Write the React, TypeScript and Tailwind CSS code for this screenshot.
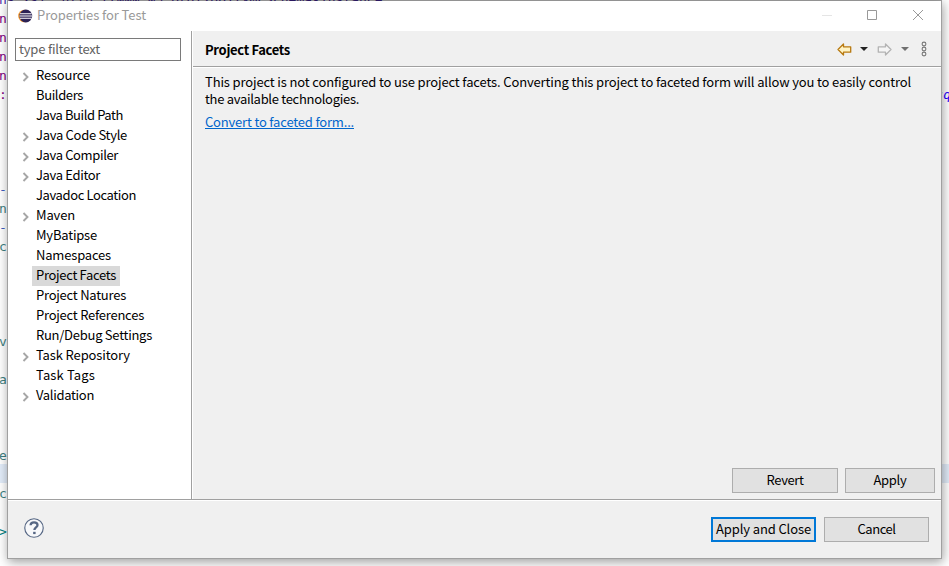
import React from "react";

const editorRows: { t: string; c: string }[] = [
  { t: "ns:xsi=\"http://www.w3.org/2001/XMLSchema-instance\"", c: "text-[#4a2aa8]" },
  { t: "n", c: "text-[#7f007f]" },
  { t: "n", c: "text-[#7f007f]" },
  { t: "n", c: "text-[#7f007f]" },
  { t: "n", c: "text-[#7f007f]" },
  { t: ":", c: "text-[#7f007f]" },
  { t: "", c: "" },
  { t: "", c: "" },
  { t: "", c: "" },
  { t: "", c: "" },
  { t: "-", c: "text-[#3f5fbf]" },
  { t: "n", c: "text-[#3f7f7f]" },
  { t: "-", c: "text-[#3f5fbf]" },
  { t: "c", c: "text-[#3f7f7f]" },
  { t: "", c: "" },
  { t: "", c: "" },
  { t: "", c: "" },
  { t: "", c: "" },
  { t: "v", c: "text-[#3f7f7f]" },
  { t: "", c: "" },
  { t: "a", c: "text-[#3f7f7f]" },
  { t: "", c: "" },
  { t: "", c: "" },
  { t: "", c: "" },
  { t: "e", c: "text-[#3f7f7f]" },
  { t: "", c: "bg-[#e2ecf9]" },
  { t: "c", c: "text-[#3f7f7f]" },
  { t: "", c: "" },
  { t: ">", c: "text-[#008080]" },
  { t: "", c: "" },
  { t: "", c: "" },
];

const tree: { label: string; open?: boolean; selected?: boolean; w: string }[] = [
  { label: "Resource", open: true, w: "w-[54px]" },
  { label: "Builders", w: "w-[47px]" },
  { label: "Java Build Path", w: "w-[87px]" },
  { label: "Java Code Style", open: true, w: "w-[91px]" },
  { label: "Java Compiler", open: true, w: "w-[82px]" },
  { label: "Java Editor", open: true, w: "w-[64px]" },
  { label: "Javadoc Location", w: "w-[100px]" },
  { label: "Maven", open: true, w: "w-[39px]" },
  { label: "MyBatipse", w: "w-[61px]" },
  { label: "Namespaces", w: "w-[75px]" },
  { label: "Project Facets", selected: true, w: "w-[80px]" },
  { label: "Project Natures", w: "w-[90px]" },
  { label: "Project References", w: "w-[108px]" },
  { label: "Run/Debug Settings", w: "w-[116px]" },
  { label: "Task Repository", open: true, w: "w-[94px]" },
  { label: "Task Tags", w: "w-[59px]" },
  { label: "Validation", open: true, w: "w-[58px]" },
];

// Stretches or tightens the letter spacing so a line occupies its box exactly.
function Fit({ children, w }: { children: string; w: string }) {
  const ref = React.useRef<HTMLSpanElement>(null);
  const [spacing, setSpacing] = React.useState(0);
  React.useLayoutEffect(() => {
    const el = ref.current;
    if (!el || !el.parentElement) return;
    const target = el.parentElement.getBoundingClientRect().width;
    setSpacing((target - el.getBoundingClientRect().width) / children.length);
  }, [children]);
  return (
    <span className={`block shrink-0 whitespace-nowrap ${w}`}>
      <span ref={ref} style={{ letterSpacing: `${spacing}px` }}>{children}</span>
    </span>
  );
}

function EclipseLogo() {
  return (
    <svg width="15" height="14" viewBox="0 0 15 14" className="-mt-px">
      <circle cx="6.5" cy="7" r="6.3" fill="#f59a2d" />
      <circle cx="7.8" cy="7" r="6.4" fill="#2c2255" />
      <path d="M2 4.7h11.6M1.5 7h12.6M2 9.3h11.6" stroke="#fff" strokeWidth="1.1" />
    </svg>
  );
}

function Arrow({ flip, stroke, fill }: { flip?: boolean; stroke: string; fill: string }) {
  return (
    <svg width="15" height="13" viewBox="0 0 15 13" className={flip ? "-scale-x-100" : ""}>
      <path d="M1 6.500 6.500 1v2.800h7.200v5.400H6.500V12Z" fill={fill} stroke={stroke} strokeWidth="1.300" strokeLinejoin="round" />
    </svg>
  );
}

function Caret({ color }: { color: string }) {
  return (
    <svg width="8" height="4" viewBox="0 0 8 4">
      <path d="M0 0h8L4 4Z" fill={color} />
    </svg>
  );
}

function Button({ label, box, w }: { label: string; box: string; w: string }) {
  return (
    <button className={`flex h-[25px] items-center justify-center bg-[#e1e1e1] pb-[2px] ${box}`}>
      <Fit w={w}>{label}</Fit>
    </button>
  );
}

export default function App() {
  return (
    <div className="relative h-[566px] w-[949px] overflow-hidden bg-white font-['Noto_Sans_CJK_SC',sans-serif] text-[13px] leading-[17px] text-black">
      <div className="-mt-[11px] font-['DejaVu_Sans_Mono',monospace] text-[13px] leading-[21px]">
        {editorRows.map((r, i) => (
          <div key={i} className={`flex h-[19px] justify-between whitespace-pre ${r.c}`}>
            <span className="-ml-px">{r.t}</span>
            {i === 5 && <span className="-mr-[2px] italic text-[#2a00ff]">sq</span>}
          </div>
        ))}
      </div>

      <div className="absolute left-[7px] top-0 flex h-[559px] w-[935px] flex-col border border-[#a0a0a0] border-t-black/35 bg-white bg-clip-padding shadow-[1px_3px_10px_rgba(0,0,0,0.38)]">
        <div className="flex h-[30px] shrink-0 items-center pl-[10px] text-[#999]">
          <EclipseLogo />
          <div className="ml-[4px] pb-[3px]"><Fit w="w-[109px]">Properties for Test</Fit></div>
          <svg width="103" height="12" viewBox="0 0 103 12" className="-mt-[2px] ml-auto mr-[17px]" fill="none">
            <path d="M1 6.500h10" stroke="#e5e5e5" />
            <path d="M46.500 1.500h9v9h-9z" stroke="#999" />
            <path d="m92 1 10 10M102 1 92 11" stroke="#999" />
          </svg>
        </div>

        <div className="flex h-[468px] shrink-0">
          <div className="w-[184px] shrink-0 border-r border-[#a0a0a0]">
            <div className="ml-[7px] mt-[7px] flex h-[23px] w-[166px] items-center border border-[#7a7a7a] pb-[2px] pl-[3px] text-[#5f5f5f]">
              <Fit w="w-[81px]">type filter text</Fit>
            </div>
            <div className="mt-[5px]">
              {tree.map((n) => (
                <div key={n.label} className="flex h-5 items-center pl-[14px]">
                  <svg width="8" height="10" viewBox="0 0 8 10" className="mt-px shrink-0" fill="none">
                    {n.open && <path d="m1.500 1 4 4-4 4" stroke="#a6a6a6" strokeWidth="1.900" />}
                  </svg>
                  <div className={`ml-[2px] flex h-5 items-center px-1 pb-[3px] ${n.selected ? "bg-[#d9d9d9]" : ""}`}>
                    <Fit w={n.w}>{n.label}</Fit>
                  </div>
                </div>
              ))}
            </div>
          </div>

          <div className="flex grow flex-col border-l border-white bg-[#f0f0f0]">
            <div className="flex h-[36px] shrink-0 items-center border-b border-[#a0a0a0] pl-[12px] pr-[14px]">
              <div className="mt-px font-bold"><Fit w="w-[85px]">Project Facets</Fit></div>
              <div className="ml-auto flex items-center pt-px">
                <Arrow stroke="#b87a12" fill="#fff3c4" />
                <div className="ml-[8px]"><Caret color="#222" /></div>
                <div className="ml-[9px]"><Arrow flip stroke="#b3b3b3" fill="#f5f5f5" /></div>
                <div className="ml-[9px]"><Caret color="#707070" /></div>
                <svg width="6" height="16" viewBox="0 0 6 16" className="ml-[12px]" fill="none" stroke="#777" strokeWidth="1.100">
                  <circle cx="3" cy="3" r="1.900" /><circle cx="3" cy="8" r="1.900" /><circle cx="3" cy="13" r="1.900" />
                </svg>
              </div>
            </div>
            <div className="flex grow flex-col border-t border-white pl-[12px] pt-[5px]">
              <Fit w="w-[706px]">This project is not configured to use project facets. Converting this project to faceted form will allow you to easily control</Fit>
              <Fit w="w-[154px]">the available technologies.</Fit>
              <a className="mt-[6px] text-[#0066cc] underline [text-decoration-skip-ink:none] decoration-1 underline-offset-1"><Fit w="w-[149px]">Convert to faceted form...</Fit></a>
              <div className="mb-[6px] mr-[6px] mt-auto flex justify-end gap-[7px]">
                <Button label="Revert" box="w-[106px] border border-[#adadad]" w="w-[37px]" />
                <Button label="Apply" box="w-[90px] border border-[#adadad]" w="w-[33px]" />
              </div>
            </div>
          </div>
        </div>

        <div className="flex grow items-start border-t border-[#a0a0a0] bg-[#f0f0f0]">
          <div className="flex w-full items-start border-t border-white pl-[16px] pr-[12px] pt-[16px]">
            <svg width="20" height="20" viewBox="0 0 21 21" className="mt-px" fill="none" stroke="#566784">
              <circle cx="10.500" cy="10.500" r="9.700" fill="#f7f8fa" strokeWidth="1.200" />
              <path d="M6.900 7.600C7 5.500 8.400 4.600 10.500 4.600c2.200 0 3.700 1 3.700 2.800 0 2.400-3.300 2.500-3.300 5.100" strokeWidth="2.400" />
              <path d="M9.600 15.700h2.600" strokeWidth="2.400" />
            </svg>
            <div className="ml-auto flex gap-[8px]">
              <Button label="Apply and Close" box="w-[105px] border-2 border-[#0078d7]" w="w-[95px]" />
              <Button label="Cancel" box="w-[105px] border border-[#adadad]" w="w-[38px]" />
            </div>
          </div>
        </div>
      </div>
    </div>
  );
}
